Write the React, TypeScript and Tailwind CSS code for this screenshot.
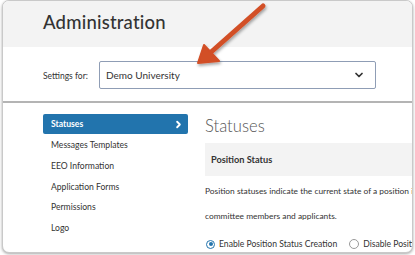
import { ChevronDown, ChevronRight } from 'lucide-react';

const menu = ['Messages Templates', 'EEO Information', 'Application Forms', 'Permissions', 'Logo'];

function Arrow() {
  return (
    <svg className="absolute left-0 top-0 pointer-events-none" width="415" height="255" viewBox="0 0 415 255">
      <defs>
        <filter id="sh" x="-20%" y="-20%" width="140%" height="140%">
          <feDropShadow dx="1" dy="2" stdDeviation="1.5" floodColor="#000" floodOpacity="0.35" />
        </filter>
      </defs>
      <g filter="url(#sh)" fill="#d24f27" stroke="#d24f27" strokeLinecap="round" strokeLinejoin="round">
        <line x1="263" y1="6" x2="210" y2="53" strokeWidth="5" />
        <polygon points="198,63 204,45 219,61" strokeWidth="2" />
      </g>
    </svg>
  );
}

export default function App() {
  return (
    <div className="relative w-[415px] h-[255px] bg-white overflow-hidden" style={{ fontFamily: 'Lato, "Open Sans", sans-serif' }}>
      <div className="mx-[2px] h-[253px] rounded-[7px] border border-[#c9c9c9] shadow-[0_1px_3px_rgba(0,0,0,0.35)] bg-white overflow-hidden flex flex-col">
        {/* header */}
        <div className="h-[46px] shrink-0 bg-[#f3f3f3] pl-[40px] pt-[9px]">
          <h1 className="text-[18.5px] leading-[24px] text-[#333] font-medium tracking-[0.2px]">Administration</h1>
        </div>

        {/* settings for */}
        <div className="h-[54px] shrink-0 flex items-center pl-[40px] pt-[2px]">
          <span className="w-[56px] text-[8.5px] text-[#333] mt-[2px]">Settings for:</span>
          <div className="w-[277px] h-[28px] border border-[#8f9db5] rounded-[2px] flex items-center justify-between pl-[6px] pr-[10px]">
            <span className="text-[10px] text-[#333]">Demo University</span>
            <ChevronDown size={12} strokeWidth={3.5} className="text-[#333]" />
          </div>
        </div>

        <div className="h-[2px] shrink-0 bg-[#b4b4b4]" />

        {/* body */}
        <div className="flex flex-1 pl-[40px] pt-[11px]">
          <div className="w-[145px] shrink-0">
            <div className="h-[20px] rounded-[2px] bg-[#2274ad] flex items-center justify-between pl-[8px] pr-[4px]">
              <span className="text-[8.6px] font-bold text-white">Statuses</span>
              <ChevronRight size={11} strokeWidth={4} className="text-white" />
            </div>
            <div className="pt-[1px]">
              {menu.map((m) => (
                <div key={m} className="h-[20.8px] flex items-center pl-[8px] text-[8.6px] text-[#333]">
                  {m}
                </div>
              ))}
            </div>
          </div>

          <div className="ml-[17px] flex-1 min-w-0">
            <h2 className="text-[16.6px] leading-[24px] font-light text-[#555]">Statuses</h2>
            <div className="mt-[5px] h-[33px] bg-[#f3f3f3] flex items-center pl-[6px]">
              <span className="text-[9.2px] font-bold text-[#333]">Position Status</span>
            </div>
            <p className="mt-[3px] text-[8.4px] leading-[25px] text-[#333] whitespace-nowrap">
              Position statuses indicate the current state of a position in the search process to
              <br />
              committee members and applicants.
            </p>
            <div className="mt-[9px] flex items-center text-[8.6px] text-[#333] whitespace-nowrap">
              <span className="shrink-0 w-[9px] h-[9px] rounded-full border-[1.5px] border-[#2274ad] flex items-center justify-center ml-[1px]">
                <span className="w-[4px] h-[4px] rounded-full bg-[#2274ad]" />
              </span>
              <span className="ml-[4px]">Enable Position Status Creation</span>
              <span className="shrink-0 ml-[12px] w-[10px] h-[10px] rounded-full border border-[#999] bg-white" />
              <span className="ml-[4px]">Disable Position Status Creation</span>
            </div>
          </div>
        </div>
      </div>
      <Arrow />
    </div>
  );
}
